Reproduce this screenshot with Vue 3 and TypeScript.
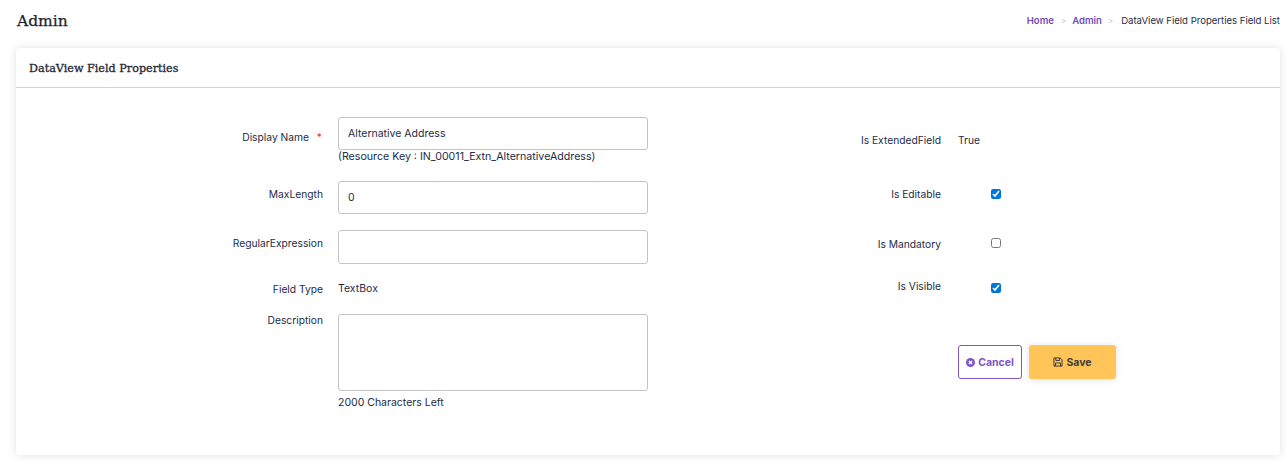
<template>
  <div class="page">
    <!-- title + breadcrumb -->
    <div class="top-bar">
      <h1>Admin</h1>
      <div class="crumbs">
        <a>Home</a>
        <span class="sep">&gt;</span>
        <a>Admin</a>
        <span class="sep">&gt;</span>
        <span class="current">DataView Field Properties Field List</span>
      </div>
    </div>

    <section class="card">
      <div class="card-head">
        <h2>DataView Field Properties</h2>
      </div>
      <div class="card-body">
        <div class="col-left">
          <div class="row row-name">
            <label>Display Name <span class="req">*</span></label>
            <div class="control">
              <input type="text" v-model="form.displayName" />
              <p class="hint">(Resource Key : IN_00011_Extn_AlternativeAddress)</p>
            </div>
          </div>
          <div class="row row-max">
            <label>MaxLength</label>
            <div class="control">
              <input type="text" v-model="form.maxLength" />
            </div>
          </div>
          <div class="row row-regex">
            <label>RegularExpression</label>
            <div class="control">
              <input type="text" v-model="form.regex" />
            </div>
          </div>
          <div class="row row-type">
            <label>Field Type</label>
            <div class="control">TextBox</div>
          </div>
          <div class="row row-desc">
            <label>Description</label>
            <div class="control">
              <textarea v-model="form.description"></textarea>
              <p class="left-count">{{ charsLeft }} Characters Left</p>
            </div>
          </div>
        </div>

        <div class="col-right">
          <div class="flag flag-ext">
            <label>Is ExtendedField</label>
            <span class="val">True</span>
          </div>
          <div v-for="f in flags" :key="f.label" class="flag" :class="f.cls">
            <label>{{ f.label }}</label>
            <input class="check" type="checkbox" v-model="f.on" />
          </div>
          <div class="actions">
            <button class="btn-cancel" type="button">
              <svg viewBox="0 0 16 16" width="9" height="9">
                <circle cx="8" cy="8" r="8" fill="currentColor" />
                <path d="M5.2 5.2l5.6 5.6M10.8 5.2l-5.6 5.6" stroke="#fff" stroke-width="2.4" />
              </svg>
              Cancel
            </button>
            <button class="btn-save" type="button">
              <svg viewBox="0 0 16 16" width="10" height="10" fill="none" stroke="currentColor" stroke-width="1.6">
                <path d="M1.5 1.5h10l3 3v10h-13z" />
                <path d="M4.5 1.5v4h6v-4M4 14.5v-5h8v5" />
              </svg>
              Save
            </button>
          </div>
        </div>
      </div>
    </section>
  </div>
</template>

<script setup lang="ts">
import { computed, reactive } from "vue";

const form = reactive({
  displayName: "Alternative Address",
  maxLength: "0",
  regex: "",
  description: "",
});

const flags = reactive([
  { label: "Is Editable", cls: "flag-edit", on: true },
  { label: "Is Mandatory", cls: "flag-mand", on: false },
  { label: "Is Visible", cls: "flag-vis", on: true },
]);

const charsLeft = computed(() => 2000 - form.description.length);
</script>

<style>
html,
body {
  background: #fff;
}
</style>

<style scoped>
.page {
  height: 472px;
  overflow: hidden;
  padding: 0 7px 0 16px;
  box-sizing: border-box;
  font-family: "Inter", "Noto Sans", sans-serif;
  font-size: 10.5px;
  color: #232c48;
}

.top-bar {
  height: 48px;
  display: flex;
  justify-content: space-between;
  align-items: flex-start;
}

h1 {
  margin: 11px 0 0 1px;
  font-family: "DejaVu Serif", serif;
  font-size: 15.5px;
  font-weight: 400;
  line-height: 20px;
  color: #1a1f2e;
  -webkit-text-stroke: 0.25px #1a1f2e;
}

.crumbs {
  margin-top: 14px;
  font-size: 9.55px;
  line-height: 14px;
  display: flex;
  white-space: nowrap;
}

.crumbs a {
  color: #6f4ab8;
  font-weight: 600;
}

.sep {
  margin: 0 6px 0 7px;
  color: #b8bcc4;
  font-size: 8px;
}

.sep + a + .sep {
  margin: 0 8px 0 6px;
}

.card {
  height: 407px;
  background: #fff;
  border-radius: 4px;
  box-shadow: 0 0 8px rgba(0, 0, 0, 0.12);
}

.card-head {
  height: 39px;
  border-bottom: 1px solid #d2d2d2;
  display: flex;
  align-items: center;
  padding-left: 13px;
  padding-top: 1px;
  box-sizing: border-box;
  height: 40px;
}

h2 {
  margin: 0;
  font-family: "DejaVu Serif", serif;
  font-size: 11.2px;
  font-weight: 400;
  color: #1f2533;
  -webkit-text-stroke: 0.3px #1f2533;
}

.card-body {
  display: flex;
  padding-top: 29px;
}

.col-left {
  width: 632px;
}

.row {
  display: flex;
}

.row > label {
  width: 307px;
  flex: none;
  text-align: right;
  margin-right: 15px;
  font-size: 10.25px;
}

.control {
  flex: 1;
}

input[type="text"],
textarea {
  display: block;
  width: 310px;
  box-sizing: border-box;
  border: 1px solid #c4c4c4;
  border-radius: 3px;
  font: inherit;
  color: inherit;
  padding: 0 9px;
  outline: none;
  background: #fff;
}

input[type="text"] {
  height: 33px;
}

textarea {
  height: 77px;
  resize: none;
}

.hint,
.left-count {
  margin: 0;
  line-height: 13px;
}

.hint {
  font-size: 10.65px;
}

.row-name {
  height: 64px;
}
.row-name > label {
  padding-top: 14px;
}

.req {
  color: #e53935;
  margin-left: 5px;
  margin-right: 1px;
}

.row-max {
  height: 49px;
}
.row-max > label {
  padding-top: 7px;
}

.row-regex {
  height: 50px;
}
.row-regex input {
  height: 34px;
}
.row-regex > label {
  padding-top: 7px;
}

.row-type {
  height: 34px;
  padding-top: 2px;
  box-sizing: border-box;
  line-height: 14px;
}

.left-count {
  margin-top: 5px;
}

.col-right {
  flex: 1;
}

.flag {
  display: flex;
  align-items: center;
  height: 14px;
  font-size: 10.25px;
}

.flag > label {
  width: 293px;
  flex: none;
  text-align: right;
  margin-right: 17px;
}

.flag-ext {
  margin-top: 16px;
}
.flag-edit {
  margin-top: 40px;
}
.flag-mand {
  margin-top: 36px;
}
.flag-vis {
  margin-top: 28px;
}

.check {
  width: 10px;
  height: 10px;
  margin: 0 0 0 33px;
  accent-color: #0075d9;
}

.flag-mand .check {
  margin-bottom: 2px;
}

.flag-vis .check {
  margin-top: 4px;
}

.actions {
  display: flex;
  gap: 7px;
  margin: 52px 0 0 310px;
}

.actions button {
  height: 34px;
  border-radius: 3px;
  font: inherit;
  font-size: 10.5px;
  font-weight: 700;
  display: flex;
  align-items: center;
  justify-content: center;
  gap: 3px;
  padding: 0;
}

.btn-cancel {
  width: 64px;
  background: #fff;
  border: 1px solid #7e57c2;
  color: #7e57c2;
}

.btn-save {
  width: 87px;
  background: #ffc558;
  border: none;
  color: #3d3d3d;
  box-shadow: 0 1px 6px rgba(0, 0, 0, 0.12);
}
</style>
